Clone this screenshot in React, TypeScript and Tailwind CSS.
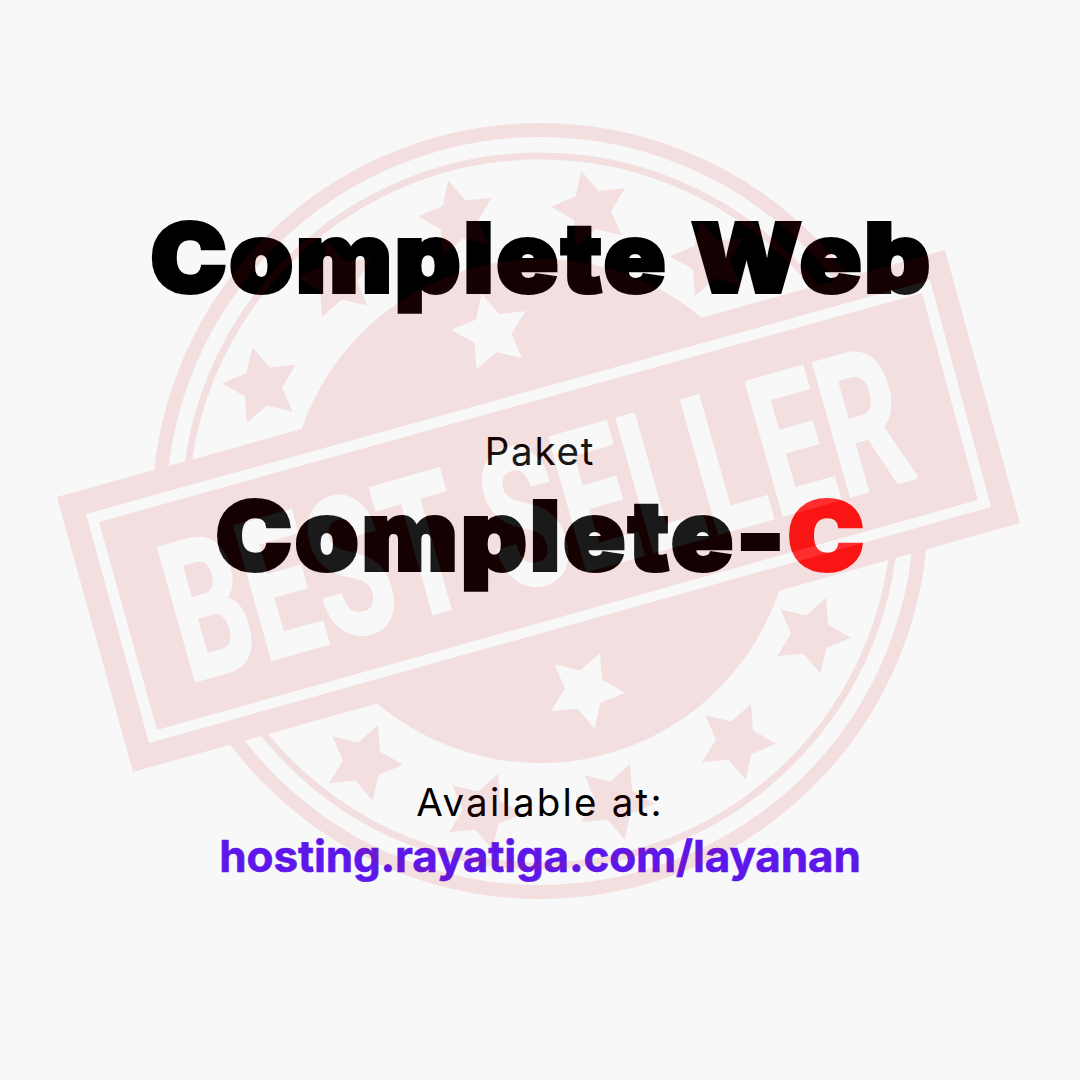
const upperStars = [
  [262, 386],
  [337, 280],
  [458, 219],
  [591, 209.5],
  [710, 259],
];
const lowerStars = [
  [363, 762],
  [483, 811],
  [615, 801],
  [736, 741],
  [811, 635],
];

function starPoints(cx: number, cy: number, rotation: number) {
  const points: string[] = [];
  for (let i = 0; i < 10; i++) {
    const r = i % 2 === 0 ? 40 : 20;
    const a = ((rotation + i * 36 - 90) * Math.PI) / 180;
    points.push(`${(cx + r * Math.cos(a)).toFixed(1)},${(cy + r * Math.sin(a)).toFixed(1)}`);
  }
  return points.join(" ");
}

function Stamp() {
  return (
    <svg
      className="absolute inset-0 opacity-10"
      width="1080"
      height="1080"
      viewBox="0 0 1080 1080"
      fill="none"
    >
      <circle cx="540" cy="511" r="381" stroke="#d01010" strokeWidth="14" />
      <circle cx="540" cy="511" r="355" stroke="#d01010" strokeWidth="7" />
      <circle cx="540" cy="511" r="252" fill="#d01010" />
      {upperStars.map(([x, y]) => (
        <polygon key={x} points={starPoints(x, y, -14)} fill="#d01010" />
      ))}
      {lowerStars.map(([x, y]) => (
        <polygon key={x} points={starPoints(x, y, 166)} fill="#d01010" />
      ))}
      <polygon points={starPoints(491.4, 332.5, -14)} fill="#ffffff" />
      <polygon points={starPoints(585, 690, 166)} fill="#ffffff" />
      <polygon points="57,497 945,250 1020,523 133,772" fill="#d01010" />
      <polygon
        fillRule="evenodd"
        fill="#ffffff"
        points="86,514 930,280 991,507 149,743 86,514 99,522 157,730 978,500 922,293 99,522"
      />
      <text
        transform="translate(188 683) rotate(-15.75) scale(0.64 1)"
        fontFamily="'Roboto', sans-serif"
        fontWeight="700"
        fontSize="194"
        fill="#ffffff"
        stroke="#ffffff"
        strokeWidth="3"
      >
        BEST SELLER
      </text>
    </svg>
  );
}

export default function App() {
  return (
    <div className="relative h-[1080px] w-[1080px] overflow-hidden bg-[#f8f8f8] font-['Inter',sans-serif] text-black">
      <div className="flex flex-col items-center pt-[198px] text-center">
        <div className="ml-[4px] scale-x-[1.07] text-[95px] leading-[120px] font-black tracking-[2.8px] [-webkit-text-stroke-width:4px]">
          Complete Web
        </div>
        <div className="mt-[108px] text-[38.5px] leading-[50px] font-normal tracking-[1.8px]">Paket</div>
        <div className="mt-0 ml-[2px] scale-x-[1.07] text-[95px] leading-[120px] font-black tracking-[3.1px] [-webkit-text-stroke-width:4px]">
          Complete-<span className="text-[#ff1616]">C</span>
        </div>
        <div className="mt-[181px] text-[38.5px] leading-[50px] font-normal tracking-[2.2px]">Available at:</div>
        <div className="mt-[-1px] text-[44px] leading-[60px] font-bold tracking-[-0.15px] text-[#5e17eb] [-webkit-text-stroke-width:0.6px]">
          hosting.rayatiga.com/layanan
        </div>
      </div>
      <Stamp />
    </div>
  );
}
